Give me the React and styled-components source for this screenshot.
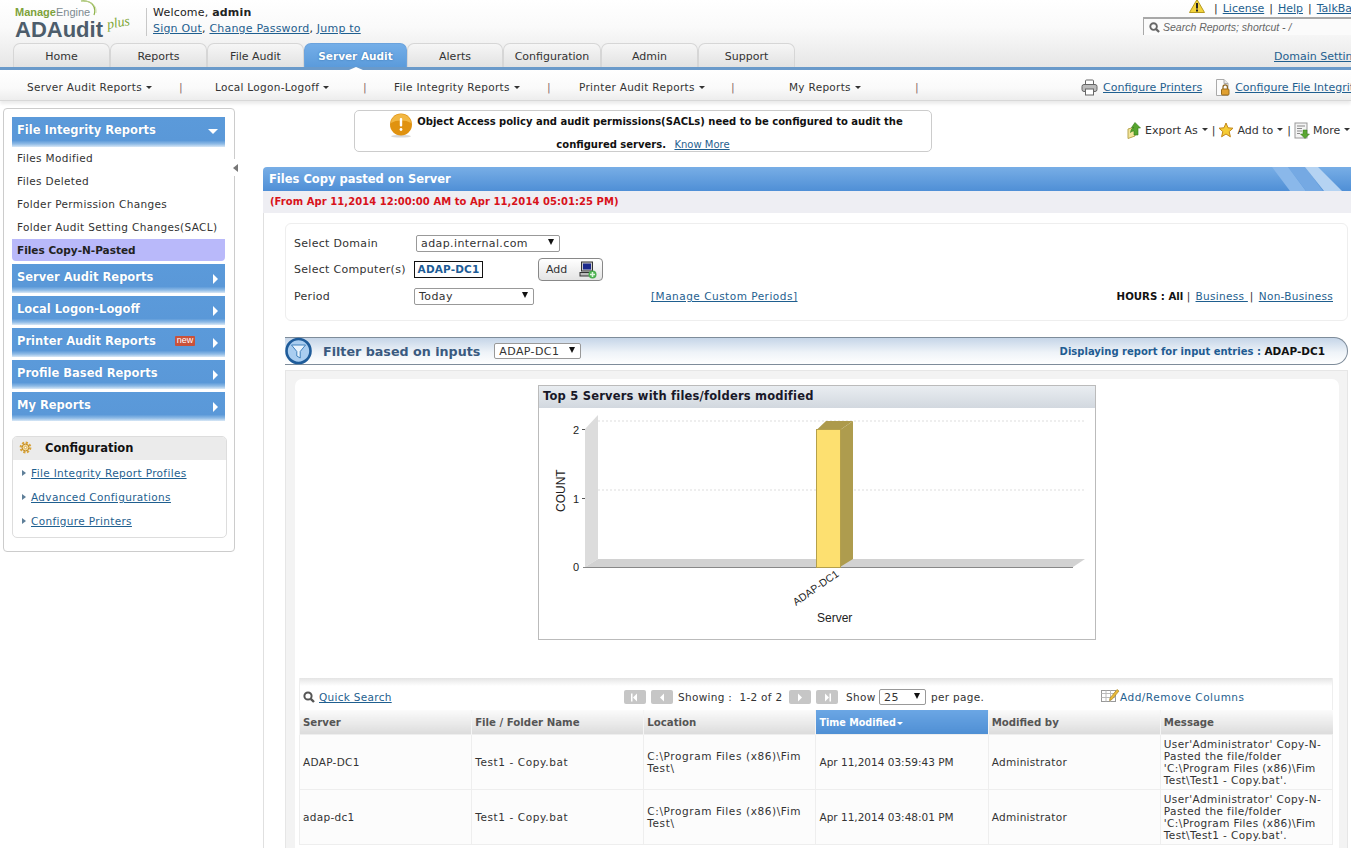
import React from 'react';
import styled, { createGlobalStyle } from 'styled-components';

const GlobalStyle = createGlobalStyle`
    html, body {
        margin: 0;
        padding: 0;
        background: #fff;
        overflow: hidden;
    }
    body {
        font: normal 11px 'DejaVu Sans', Verdana, sans-serif;
        color: #222;
    }
    * { box-sizing: border-box; }
`;

const blueBar = `linear-gradient(to bottom, #5b9ada 0%, #5a98d8 78%, #8fbbe6 90%, #d9e8f6 100%)`;

const Page = styled.div`
    width: 1351px;
    height: 848px;
    overflow: hidden;
    white-space: nowrap;
`;

const A = styled.a`
    color: #1f5f8f;
    text-decoration: underline;
    cursor: pointer;
`;

// Header
const Header = styled.header`
    height: 70px;
    background: linear-gradient(to bottom, #fff 0%, #fafafa 40%, #e6e6e6 100%);
    border-bottom: 3px solid #6a9aca;
`;

const HeaderTop = styled.div`
    height: 43px;
    display: flex;
    align-items: flex-start;
`;

const Logo = styled.div`
    position: relative;
    width: 146px;
    height: 43px;
    margin-left: 15px;
    padding-top: 6px;
`;

const LogoBrand = styled.div`
    font: normal 11px/13px 'Liberation Sans', Arial, sans-serif;
    color: #7d8a90;
    b { color: #7da23a; }
`;

const LogoName = styled.div`
    font: bold 22px/20px 'Liberation Sans', Arial, sans-serif;
    color: #4d5d6b;
    margin-top: 1px;
`;

const LogoPlus = styled.span`
    position: absolute;
    left: 92px;
    top: 16px;
    font: italic normal 14px/14px 'Liberation Serif', serif;
    letter-spacing: -0.2px;
    color: #7fa83a;
    transform: rotate(-10deg);
`;

const LogoArc = styled.svg`
    position: absolute;
    left: 62px;
    top: 0;
`;

const Divider = styled.div`
    width: 1px;
    height: 28px;
    margin: 8px 6px 0 -15px;
    background: #c8c8c8;
`;

const Welcome = styled.div`
    padding-top: 5px;
    line-height: 16px;
    font-size: 11px;
    letter-spacing: 0.2px;
`;

const HeaderRight = styled.div`
    margin-left: auto;
    width: 208px;
    overflow: hidden;
`;

const TopLinks = styled.div`
    display: flex;
    align-items: center;
    height: 16px;
    padding: 1px 0 0 46px;
    gap: 5px;
    color: #333;
    > * { flex: none; }
    svg { margin: -6px 4px 0 0; }
`;

const SearchBox = styled.div`
    height: 18px;
    margin-top: 1px;
    display: flex;
    align-items: center;
    gap: 3px;
    padding-left: 5px;
    border-top: 2px solid #a8a8a8;
    border-left: 1px solid #a8a8a8;
    background: #fbfbfb;
    font: italic 10.5px 'Liberation Sans', Arial, sans-serif;
    color: #666;
`;

const TabRow = styled.nav`
    display: flex;
    height: 24px;
    padding-left: 13px;
    align-items: flex-end;
`;

const Tab = styled.div`
    position: relative;
    width: ${p => p.$w}px;
    height: 24px;
    line-height: 25px;
    text-align: center;
    font-size: ${p => (p.$active ? 10.5 : 11)}px;
    color: ${p => (p.$active ? '#fff' : '#333')};
    font-weight: ${p => (p.$active ? 'bold' : 'normal')};
    border: 1px solid ${p => (p.$active ? '#6ba3dd' : '#d6d6d6')};
    border-bottom: 0;
    border-radius: 7px 7px 0 0;
    background: ${p => (p.$active
        ? 'linear-gradient(to bottom, #74aee8, #5b9bdb)'
        : 'linear-gradient(to bottom, #f6f6f6, #e2e2e2)')};
    ${p => p.$active && `
        text-shadow: 0 0 2px #2f6ba8;
        &::after {
            content: '';
            position: absolute;
            left: 44px;
            bottom: -3px;
            border: 7px solid transparent;
            border-top: 0;
            border-bottom: 3px solid #fff;
        }
    `}
`;

const DomainLink = styled(A)`
    margin-left: auto;
    width: 77px;
    overflow: hidden;
    line-height: 20px;
    font-size: 11px;
`;

// Second level menu
const SubNav = styled.nav`
    position: relative;
    height: 31px;
    display: flex;
    align-items: center;
    padding: 4px 0 0 27px;
    background: linear-gradient(to bottom, #fff 0%, #fafafa 60%, #ededed 100%);
    border-bottom: 1px solid #d8d8d8;
    box-shadow: 0 3px 3px #ececec;
`;

const SubItem = styled.div`
    width: ${p => p.$w}px;
    display: flex;
    align-items: center;
    font-size: 10.5px;
    letter-spacing: 0.3px;
    color: #333;
    &::after {
        content: '';
        margin-left: 4px;
        border: 3px solid transparent;
        border-top: 3px solid #333;
        border-bottom: 0;
    }
`;

const SubSep = styled.span`
    width: ${p => p.$w}px;
    color: #8a6a6a;
`;

const SubRight = styled.div`
    margin-left: auto;
    width: 270px;
    overflow: hidden;
    display: flex;
    align-items: center;
    font-size: 11px;
    svg { flex: none; }
`;

const PrintersLink = styled(A)`
    margin: 0 13px 0 5px;
`;

const FileLink = styled(A)`
    margin-left: 4px;
`;

// Page body
const Body = styled.div`
    display: flex;
    height: 747px;
`;

const SideColumn = styled.aside`
    position: relative;
    flex: none;
    width: 263px;
    padding: 7px 0 0 3px;
`;

const SidePanel = styled.div`
    position: relative;
    width: 232px;
    height: 444px;
    padding: 8px 0 0 8px;
    border: 1px solid #ccc;
    border-radius: 4px;
`;

const Collapse = styled.div`
    position: absolute;
    right: -6px;
    top: 50px;
    width: 7px;
    height: 17px;
    background: #fff;
    display: flex;
    align-items: center;
    &::before {
        content: '';
        border: 4px solid transparent;
        border-left: 0;
        border-right: 5px solid #777;
    }
`;

const SideHead = styled.div`
    width: 213px;
    height: ${p => (p.$first ? 30 : 29)}px;
    margin-top: ${p => (p.$first ? 0 : 3)}px;
    padding: 0 7px ${p => (p.$first ? 5 : 3)}px 5px;
    display: flex;
    align-items: center;
    background: ${blueBar};
    color: #fff;
    font-weight: bold;
    font-size: 11.5px;
    text-shadow: 0 0 1px #3a78b8;
`;

const SideArrow = styled.span`
    margin-left: auto;
    margin-top: 4px;
    ${p => (p.$open
        ? 'border: 5px solid transparent; border-top: 5px solid #fff; border-bottom: 0;'
        : 'border: 5px solid transparent; border-left: 5px solid #fff; border-right: 0;')}
`;

const NewBadge = styled.span`
    margin-left: 19px;
    padding: 0 2px;
    height: 10px;
    background: #c9513a;
    color: #fff;
    font: normal 9px/9px 'Liberation Sans', Arial, sans-serif;
    text-shadow: none;
    border-radius: 1px;
`;

const SideItem = styled.div`
    width: 213px;
    height: ${p => (p.$active ? 22 : 23)}px;
    line-height: 23px;
    padding-left: 5px;
    font-size: 10.5px;
    letter-spacing: 0.35px;
    color: #333;
    ${p => p.$active && `
        background: #b9b9fa;
        font-weight: bold;
        letter-spacing: 0;
        color: #222;
        border-radius: 0 0 4px 4px;
    `}
`;

const ConfigBox = styled.div`
    width: 215px;
    height: 102px;
    margin-top: 15px;
    border: 1px solid #ddd;
    border-radius: 5px;
    overflow: hidden;
`;

const ConfigHead = styled.div`
    height: 23px;
    display: flex;
    align-items: center;
    gap: 13px;
    padding: 0 0 2px 6px;
    background: #ebebeb;
    font-weight: bold;
    font-size: 11.5px;
    color: #111;
`;

const ConfigLinks = styled.div`
    padding: 1px 0 0 9px;
`;

const ConfigRow = styled.div`
    height: 24px;
    display: flex;
    align-items: center;
    font-size: 10.5px;
    letter-spacing: 0.35px;
    &::before {
        content: '';
        margin-right: 5px;
        border: 3.5px solid transparent;
        border-left: 4px solid #5f7f99;
        border-right: 0;
    }
`;

const Main = styled.main`
    flex: 1;
    min-width: 0;
    padding-top: 9px;
`;

const NoticeRow = styled.div`
    display: flex;
    align-items: flex-start;
    padding-left: 91px;
    height: 42px;
`;

const Notice = styled.div`
    position: relative;
    width: 578px;
    height: 42px;
    border: 1px solid #ccc;
    border-radius: 5px;
    text-align: center;
    font: bold 10px/22.5px 'DejaVu Sans', Verdana, sans-serif;
    padding: 0 0 0 34px;
    color: #111;
    svg { position: absolute; left: 34px; top: 2px; }
`;

const NoticeLine = styled.div`
    margin-left: ${p => p.$ml || 0}px;
    ${A} { font-weight: normal; margin-left: 5px; }
`;

const ActionRow = styled.div`
    margin-left: auto;
    display: flex;
    align-items: center;
    gap: 3px;
    width: 224px;
    height: 18px;
    margin-top: 11px;
    overflow: hidden;
    font-size: 11px;
    color: #333;
    svg { flex: none; }
`;

const Caret = styled.span`
    display: inline-block;
    margin: 0 1px 1px 1px;
    border: 3px solid transparent;
    border-top: 3px solid ${p => p.$color || '#333'};
    border-bottom: 0;
`;

const TitleBar = styled.div`
    height: 24px;
    margin-top: 15px;
    display: flex;
    align-items: center;
    justify-content: space-between;
    padding-left: 6px;
    background: linear-gradient(to bottom, #78aee6, #4f8fd6);
    border-radius: 4px 0 0 0;
    color: #fff;
    font-weight: bold;
    font-size: 11.5px;
`;

const RangeBar = styled.div`
    height: 22px;
    line-height: 22px;
    padding-left: 7px;
    background: #eeeef3;
    color: #d8121a;
    font-weight: bold;
    font-size: 10px;
    letter-spacing: 0.05px;
`;

const ReportBody = styled.section`
    border-left: 1px solid #e0e0e0;
    padding: 10px 3px 0 21px;
`;

const FormBox = styled.div`
    height: 98px;
    padding: 9px 12px 0 8px;
    border: 1px solid #eee;
    border-radius: 6px;
`;

const FormRow = styled.div`
    display: flex;
    align-items: center;
    height: ${p => p.$h}px;
    font-size: 11px;
    color: #333;
`;

const FormLabel = styled.label`
    width: 120px;
    flex: none;
    letter-spacing: 0.3px;
`;

const FakeSelect = styled.div`
    width: ${p => p.$w}px;
    height: ${p => p.$h || 17}px;
    margin-left: ${p => p.$ml || 0}px;
    flex: none;
    padding: 0 5px 0 4px;
    display: flex;
    align-items: center;
    justify-content: space-between;
    background: #fff;
    border: 1px solid #999;
    border-radius: 2px;
    font-size: 11px;
    letter-spacing: 0.4px;
    color: #333;
    &::after {
        content: '';
        margin-top: -2px;
        border: 3.5px solid transparent;
        border-top: 6px solid #111;
        border-bottom: 0;
    }
`;

const ComputerTag = styled.div`
    width: 69px;
    height: 17px;
    line-height: 15px;
    text-align: center;
    border: 1px solid #111;
    color: #1d5c96;
    font-weight: bold;
    font-size: 10.5px;
    letter-spacing: 0.15px;
`;

const AddButton = styled.button`
    width: 65px;
    height: 23px;
    margin-left: 55px;
    padding: 0 5px 0 7px;
    display: flex;
    align-items: center;
    justify-content: space-between;
    background: linear-gradient(to bottom, #fff, #e4e4e4);
    border: 1px solid #888;
    border-radius: 4px;
    font: normal 11px 'DejaVu Sans', Verdana, sans-serif;
    color: #333;
`;

const ManageLink = styled(A)`
    margin-left: 117px;
    font-size: 10.5px;
    letter-spacing: 0.5px;
`;

const Hours = styled.div`
    margin-left: auto;
    font-size: 10.5px;
    color: #333;
    b { color: #111; font-size: 10.2px; }
    ${A} { margin: 0 2px; letter-spacing: 0.3px; }
`;

const FilterBar = styled.div`
    position: relative;
    height: 28px;
    width: 1063px;
    margin-top: 16px;
    padding: 0 22px 0 38px;
    display: flex;
    align-items: center;
    border: 1px solid #7e8c9a;
    border-left: 0;
    border-radius: 0 14px 14px 0;
    background: linear-gradient(to bottom, #c5d5e8 0%, #eef3f8 55%, #fff 100%);
    svg { position: absolute; left: 0; top: -1px; }
`;

const FilterTitle = styled.span`
    font: bold 12.7px 'DejaVu Sans', Verdana, sans-serif;
    color: #3a5a80;
    margin-right: 14px;
`;

const FilterInfo = styled.div`
    margin-left: auto;
    font-weight: bold;
    font-size: 10px;
    color: #1f5c92;
    b { color: #111; font-size: 10.5px; }
`;

const ResultPanel = styled.div`
    width: 1063px;
    height: 478px;
    margin-top: 5px;
    padding: 8px 8px 0 9px;
    background: #f3f3f3;
    border: 1px solid #e6e6e6;
    border-bottom: 0;
`;

const ResultInner = styled.div`
    height: 100%;
    padding-top: 6px;
    background: #fff;
    border-radius: 7px 7px 0 0;
`;

const ChartBox = styled.div`
    width: 558px;
    height: 255px;
    margin: 0 auto;
    border: 1px solid #bbb;
`;

const ChartHead = styled.div`
    height: 22px;
    line-height: 21px;
    padding-left: 4px;
    background: linear-gradient(to bottom, #e9edf1, #d2d8df);
    font-weight: bold;
    font-size: 11.5px;
    letter-spacing: 0.2px;
    color: #181828;
`;

const ChartSvg = styled.svg`
    display: block;
    text { font-family: 'Liberation Sans', Arial, sans-serif; font-size: 11px; fill: #222; }
`;

const TableWrap = styled.div`
    margin: 38px 6px 0 4px;
`;

const Toolbar = styled.div`
    height: 32px;
    display: grid;
    grid-template-columns: 324px 477px 1fr;
    align-items: center;
    padding-top: 6px;
    border: 1px solid #eee;
    border-bottom: 0;
    border-top: 0;
    background: linear-gradient(to bottom, #e4e4e4 0, #fff 8px);
    font-size: 10.5px;
    letter-spacing: 0.3px;
    color: #333;
`;

const QuickSearch = styled.div`
    display: flex;
    align-items: center;
    padding-left: 3px;
    gap: 4px;
`;

const Pager = styled.div`
    display: flex;
    align-items: center;
    gap: 5px;
`;

const PagerButton = styled.span`
    width: 22px;
    height: 14px;
    display: flex;
    align-items: center;
    justify-content: center;
    background: #c6c6c6;
    border-radius: 2px;
`;

const PagerText = styled.span`
    width: ${p => p.$w}px;
    flex: none;
    margin-left: ${p => p.$ml || 0}px;
`;

const ColumnsLink = styled.div`
    display: flex;
    align-items: center;
    color: #1f5f8f;
    letter-spacing: 0.5px;
    svg { margin-top: -4px; }
`;

const Table = styled.table`
    width: 1034px;
    table-layout: fixed;
    border-collapse: collapse;
    font-size: 10.5px;
    color: #333;
    white-space: normal;
`;

const Th = styled.th`
    height: 24px;
    padding: 1px 3px 0;
    text-align: left;
    font-size: ${p => (p.$sorted ? 9.6 : 10.2)}px;
    font-weight: bold;
    color: ${p => (p.$sorted ? '#fff' : '#555')};
    background: ${p => (p.$sorted
        ? 'linear-gradient(to bottom, #6ba6e4, #4f8fd4)'
        : 'linear-gradient(to bottom, #fbfbfb, #dcdcdc)')};
    border-left: 1px solid #f4f4f4;
`;

const Td = styled.td`
    height: 55px;
    padding: 0 3px;
    line-height: 12px;
    letter-spacing: ${p => p.$ls || 0}px;
    background: #fcfcfc;
    border: 1px solid #eee;
`;

// Icons
const WarningIcon = () => (
    <svg width="16" height="14" viewBox="0 0 16 14">
        <path d="M8 0.5 L15.5 13.5 H0.5 Z" fill="#f4d43c" stroke="#b59a20" strokeLinejoin="round" />
        <rect x="7" y="4" width="2" height="5.5" fill="#222" />
        <rect x="7" y="10.5" width="2" height="2" fill="#222" />
    </svg>
);

const SearchIcon = ({ size = 11, color = '#666' }) => (
    <svg width={size} height={size} viewBox="0 0 12 12">
        <circle cx="5" cy="5" r="3.6" fill="none" stroke={color} strokeWidth="2" />
        <path d="M7.8 7.8 L11 11" stroke={color} strokeWidth="2.4" />
    </svg>
);

const PrinterIcon = () => (
    <svg width="17" height="17" viewBox="0 0 17 17">
        <rect x="4.5" y="1" width="8" height="5" rx="1" fill="#fff" stroke="#666" />
        <rect x="1" y="5.5" width="15" height="7" rx="2" fill="#bbb" stroke="#666" />
        <rect x="4.5" y="10" width="8" height="6" fill="#fff" stroke="#666" />
    </svg>
);

const FileLockIcon = () => (
    <svg width="16" height="17" viewBox="0 0 16 17">
        <path d="M1.5 0.5 H9 L13 4.5 V16.5 H1.5 Z" fill="#fbfbfb" stroke="#aaa" />
        <path d="M9 0.5 V4.5 H13" fill="#e8e8e8" stroke="#aaa" />
        <path d="M8 10 V8 a2.2 2.2 0 0 1 4.4 0 V10" fill="none" stroke="#8a6420" strokeWidth="1.2" />
        <rect x="6.5" y="10" width="7.5" height="6" rx="1" fill="#e0a030" stroke="#9a6a18" />
    </svg>
);

const ExportIcon = () => (
    <svg width="15" height="17" viewBox="0 0 15 17">
        <path d="M1 7 L8 5 V14 L1 16.5 Z" fill="#f2e59a" stroke="#b8a650" />
        <path d="M8 0.5 L13.5 6 H11 V13 H7 V9 C5.5 9 4.5 9.5 3.5 10.5 C4 7.5 5 6 7 5.6 H4.5 Z" fill="#57a52f" stroke="#2f7a18" strokeWidth="0.6" />
    </svg>
);

const StarIcon = () => (
    <svg width="16" height="16" viewBox="0 0 16 16">
        <path d="M8 1 L10 5.8 L15 6.2 L11.2 9.6 L12.4 14.8 L8 12 L3.6 14.8 L4.8 9.6 L1 6.2 L6 5.8 Z" fill="#f6cc35" stroke="#c2871a" />
    </svg>
);

const MoreIcon = () => (
    <svg width="16" height="17" viewBox="0 0 16 17">
        <rect x="1" y="1" width="12" height="15" fill="#f4f4f4" stroke="#999" />
        <path d="M3 4 H11 M3 6.5 H8 M3 9 H8 M3 11.5 H6" stroke="#888" />
        <path d="M9 8 H13 V12 H15.5 L11 16.5 L6.5 12 H9 Z" fill="#5aa632" stroke="#327a1a" strokeWidth="0.5" />
    </svg>
);

const NoticeIcon = () => (
    <svg width="24" height="25" viewBox="0 0 24 25">
        <ellipse cx="12" cy="23.2" rx="10" ry="1.4" fill="#d8d8d8" />
        <circle cx="12" cy="11.5" r="11" fill="#e09210" />
        <path d="M2 10 a10 9 0 0 1 20 0 a14 8 0 0 0 -20 0" fill="#f2b743" />
        <rect x="10.8" y="5" width="2.4" height="8.5" rx="1" fill="#fff" />
        <circle cx="12" cy="16.5" r="1.4" fill="#fff" />
    </svg>
);

const FilterIcon = () => (
    <svg width="27" height="28" viewBox="0 0 27 28">
        <circle cx="13.5" cy="14" r="12" fill="#a9cdf0" stroke="#1f5c9a" strokeWidth="2.6" />
        <path d="M6.5 8 H20.5 L15.2 14.5 V21 L11.8 19 V14.5 Z" fill="#eaf4fd" stroke="#3f80bd" />
    </svg>
);

const GearIcon = () => (
    <svg width="13" height="13" viewBox="0 0 13 13">
        <circle cx="6.5" cy="6.5" r="4.4" fill="none" stroke="#d8a43a" strokeWidth="3" strokeDasharray="2 1.4" />
        <circle cx="6.5" cy="6.5" r="3.4" fill="#f5dc9a" stroke="#c08a28" />
        <circle cx="6.5" cy="6.5" r="1.2" fill="#fff" stroke="#c08a28" strokeWidth="0.6" />
    </svg>
);

const ComputerAddIcon = () => (
    <svg width="18" height="18" viewBox="0 0 18 18">
        <rect x="2.5" y="1" width="11" height="9" fill="#ccc" stroke="#333" />
        <rect x="4" y="2.5" width="8" height="6" fill="#1c2a8c" />
        <rect x="1" y="11.5" width="13" height="3.5" fill="#bbb" stroke="#333" />
        <circle cx="13.5" cy="13.5" r="4" fill="#4cb050" />
        <path d="M13.5 11 V16 M11 13.5 H16" stroke="#dff5df" strokeWidth="1.6" />
    </svg>
);

const PagerGlyph = ({ dir, bar }) => (
    <svg width="10" height="9" viewBox="0 0 10 9">
        {dir === 'left'
            ? <path d="M7 0.5 V8.5 L3 4.5 Z" fill="#fff" />
            : <path d="M3 0.5 V8.5 L7 4.5 Z" fill="#fff" />}
        {bar && <rect x={dir === 'left' ? 1 : 7.5} y="0.5" width="1.5" height="8" fill="#fff" />}
    </svg>
);

const ColumnsIcon = () => (
    <svg width="19" height="15" viewBox="0 0 19 15">
        <rect x="0.5" y="2.5" width="14" height="11" fill="#fff" stroke="#999" />
        <path d="M0.5 5.5 H14.5 M0.5 9.5 H14.5 M5 2.5 V13.5 M9.5 2.5 V13.5" stroke="#bbb" />
        <path d="M9 10 L16 1.5 L18 3 L11 11.5 L8.5 12.5 Z" fill="#e8b93a" stroke="#a07a18" strokeWidth="0.6" />
    </svg>
);

const Stripes = () => (
    <svg width="79" height="24" viewBox="0 0 79 24">
        <path d="M0 0 H16 L34 24 H18 Z" fill="#8ab8ea" />
        <path d="M16 0 H33 L51 24 H34 Z" fill="#75a9e3" />
        <path d="M33 0 H46 L70 24 H52 Z" fill="#b5d3f2" />
    </svg>
);

const tabs = [
    ['Home', 97], ['Reports', 97], ['File Audit', 97], ['Server Audit', 103],
    ['Alerts', 96], ['Configuration', 98], ['Admin', 97], ['Support', 97],
];

const subItems = [
    ['Server Audit Reports', 152, 36],
    ['Local Logon-Logoff', 148, 31],
    ['File Integrity Reports', 153, 32],
    ['Printer Audit Reports', 152, 58],
    ['My Reports', 126, 0],
];

const fileReports = [
    'Files Modified',
    'Files Deleted',
    'Folder Permission Changes',
    'Folder Audit Setting Changes(SACL)',
];

const columns = ['Server', 'File / Folder Name', 'Location', 'Time Modified', 'Modified by', 'Message'];

const rows = [
    ['ADAP-DC1', 'Apr 11,2014 03:59:43 PM'],
    ['adap-dc1', 'Apr 11,2014 03:48:01 PM'],
];

export default function App() {
    return (
        <Page>
            <GlobalStyle />
            <Header>
                <HeaderTop>
                    <Logo>
                        <LogoArc width="34" height="18" viewBox="0 0 34 18">
                            <path d="M4 1 C14 0 20 6 17 15" fill="none" stroke="#8fb34a" strokeWidth="1.2" />
                            <path d="M8 1 C16 2 20 7 19 13" fill="none" stroke="#c5d79a" strokeWidth="0.8" />
                        </LogoArc>
                        <LogoBrand><b>Manage</b>Engine</LogoBrand>
                        <LogoName>ADAudit</LogoName>
                        <LogoPlus>plus</LogoPlus>
                    </Logo>
                    <Divider />
                    <Welcome>
                        <div>Welcome, <b>admin</b></div>
                        <div><A>Sign Out</A>, <A>Change Password</A>, <A>Jump to</A></div>
                    </Welcome>
                    <HeaderRight>
                        <TopLinks>
                            <WarningIcon />
                            <span>|</span> <A>License</A> <span>|</span> <A>Help</A> <span>|</span> <A>TalkBack</A>
                        </TopLinks>
                        <SearchBox>
                            <SearchIcon />
                            Search Reports; shortcut - /
                        </SearchBox>
                    </HeaderRight>
                </HeaderTop>
                <TabRow>
                    {tabs.map(([label, w]) => (
                        <Tab key={label} $w={w} $active={label === 'Server Audit'}>{label}</Tab>
                    ))}
                    <DomainLink>Domain Settings</DomainLink>
                </TabRow>
            </Header>

            <SubNav>
                {subItems.map(([label, w, sep]) => (
                    <React.Fragment key={label}>
                        <SubItem $w={w}>{label}</SubItem>
                        <SubSep $w={sep}>|</SubSep>
                    </React.Fragment>
                ))}
                <SubRight>
                    <PrinterIcon />
                    <PrintersLink>Configure Printers</PrintersLink>
                    <FileLockIcon />
                    <FileLink>Configure File Integrity</FileLink>
                </SubRight>
            </SubNav>

            <Body>
                <SideColumn>
                    <SidePanel>
                        <Collapse />
                        <SideHead $first>File Integrity Reports<SideArrow $open /></SideHead>
                        {fileReports.map(item => <SideItem key={item}>{item}</SideItem>)}
                        <SideItem $active>Files Copy-N-Pasted</SideItem>
                        <SideHead>Server Audit Reports<SideArrow /></SideHead>
                        <SideHead>Local Logon-Logoff<SideArrow /></SideHead>
                        <SideHead>Printer Audit Reports<NewBadge>new</NewBadge><SideArrow /></SideHead>
                        <SideHead>Profile Based Reports<SideArrow /></SideHead>
                        <SideHead>My Reports<SideArrow /></SideHead>
                        <ConfigBox>
                            <ConfigHead><GearIcon />Configuration</ConfigHead>
                            <ConfigLinks>
                                <ConfigRow><A>File Integrity Report Profiles</A></ConfigRow>
                                <ConfigRow><A>Advanced Configurations</A></ConfigRow>
                                <ConfigRow><A>Configure Printers</A></ConfigRow>
                            </ConfigLinks>
                        </ConfigBox>
                    </SidePanel>
                </SideColumn>

                <Main>
                    <NoticeRow>
                        <Notice>
                            <NoticeIcon />
                            <NoticeLine>Object Access policy and audit permissions(SACLs) need to be configured to audit the</NoticeLine>
                            <NoticeLine $ml={-34}>configured servers. <A>Know More</A></NoticeLine>
                        </Notice>
                        <ActionRow>
                            <ExportIcon /> Export As <Caret /> | <StarIcon /> Add to <Caret /> | <MoreIcon /> More <Caret />
                        </ActionRow>
                    </NoticeRow>

                    <TitleBar>Files Copy pasted on Server<Stripes /></TitleBar>
                    <RangeBar>(From Apr 11,2014 12:00:00 AM to Apr 11,2014 05:01:25 PM)</RangeBar>

                    <ReportBody>
                        <FormBox>
                            <FormRow $h={20}>
                                <FormLabel>Select Domain</FormLabel>
                                <FakeSelect $w={144} $ml={2}>adap.internal.com</FakeSelect>
                            </FormRow>
                            <FormRow $h={33}>
                                <FormLabel>Select Computer(s)</FormLabel>
                                <ComputerTag>ADAP-DC1</ComputerTag>
                                <AddButton>Add<ComputerAddIcon /></AddButton>
                            </FormRow>
                            <FormRow $h={20}>
                                <FormLabel>Period</FormLabel>
                                <FakeSelect $w={120}>Today</FakeSelect>
                                <ManageLink>[Manage Custom Periods]</ManageLink>
                                <Hours><b>HOURS : All</b> | <A>Business </A>| <A>Non-Business </A></Hours>
                            </FormRow>
                        </FormBox>

                        <FilterBar>
                            <FilterIcon />
                            <FilterTitle>Filter based on inputs</FilterTitle>
                            <FakeSelect $w={87} $h={16}>ADAP-DC1</FakeSelect>
                            <FilterInfo>Displaying report for input entries : <b>ADAP-DC1</b></FilterInfo>
                        </FilterBar>

                        <ResultPanel>
                            <ResultInner>
                                <ChartBox>
                                    <ChartHead>Top 5 Servers with files/folders modified</ChartHead>
                                    <ChartSvg width="556" height="231" viewBox="539 408 556 231">
                                        <path d="M598 421 H1085" stroke="#ddd" strokeDasharray="2 2" />
                                        <path d="M598 490 H1085" stroke="#ddd" strokeDasharray="2 2" />
                                        <path d="M585 429 L598 415 V559 L585 567 Z" fill="#dcdcdc" />
                                        <path d="M598 559 H1085 L1073 567 H585 Z" fill="#d2d2d2" />
                                        <path d="M583 567.5 H1073" stroke="#888" />
                                        <path d="M816.5 430 L826 421 H853 L840 430 Z" fill="#ad9a4c" />
                                        <path d="M840 430 L853 421 V559 L840 567 Z" fill="#ae9c4e" />
                                        <rect x="816.5" y="429.5" width="24" height="138" fill="#fde070" stroke="#b5a04a" />
                                        <path d="M582 429.5 H585 M582 498.5 H585" stroke="#555" />
                                        <text x="573" y="434">2</text>
                                        <text x="573" y="503">1</text>
                                        <text x="573" y="571">0</text>
                                        <text transform="translate(565 512) rotate(-90)" style={{ fontSize: 12 }}>COUNT</text>
                                        <text transform="translate(796 606) rotate(-35)" style={{ fontSize: 10.5 }}>ADAP-DC1</text>
                                        <text x="817" y="622" style={{ fontSize: 12 }}>Server</text>
                                    </ChartSvg>
                                </ChartBox>

                                <TableWrap>
                                    <Toolbar>
                                        <QuickSearch>
                                            <SearchIcon size={12} color="#555" />
                                            <A>Quick Search</A>
                                        </QuickSearch>
                                        <Pager>
                                            <PagerButton><PagerGlyph dir="left" bar /></PagerButton>
                                            <PagerButton><PagerGlyph dir="left" /></PagerButton>
                                            <PagerText $w={106}>Showing :&nbsp; 1-2 of 2</PagerText>
                                            <PagerButton><PagerGlyph dir="right" /></PagerButton>
                                            <PagerButton><PagerGlyph dir="right" bar /></PagerButton>
                                            <PagerText $w={28} $ml={3}>Show</PagerText>
                                            <FakeSelect $w={47} $h={16}>25</FakeSelect>
                                            <span>per page.</span>
                                        </Pager>
                                        <ColumnsLink><ColumnsIcon />Add/Remove Columns</ColumnsLink>
                                    </Toolbar>
                                    <Table>
                                        <thead>
                                            <tr>
                                                {columns.map(col => (
                                                    <Th key={col} $sorted={col === 'Time Modified'}>
                                                        {col}
                                                        {col === 'Time Modified' && <Caret $color="#fff" />}
                                                    </Th>
                                                ))}
                                            </tr>
                                        </thead>
                                        <tbody>
                                            {rows.map(([server, time]) => (
                                                <tr key={time}>
                                                    <Td $ls={0.3}>{server}</Td>
                                                    <Td $ls={0.6}>Test1 - Copy.bat</Td>
                                                    <Td $ls={0.6}>C:\Program Files (x86)\Fim Test\</Td>
                                                    <Td>{time}</Td>
                                                    <Td $ls={0.3}>Administrator</Td>
                                                    <Td $ls={0.4}>User'Administrator' Copy-N-Pasted the file/folder 'C:\Program Files (x86)\Fim Test\Test1 - Copy.bat'.</Td>
                                                </tr>
                                            ))}
                                        </tbody>
                                    </Table>
                                </TableWrap>
                            </ResultInner>
                        </ResultPanel>
                    </ReportBody>
                </Main>
            </Body>
        </Page>
    );
}
